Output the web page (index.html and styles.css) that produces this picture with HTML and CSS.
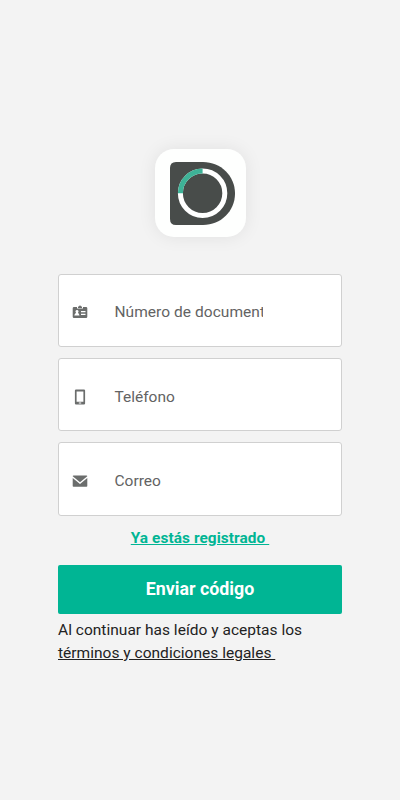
FILE: index.html
```html
<!DOCTYPE html>
<html lang="es">
<head>
<meta charset="utf-8">
<meta name="viewport" content="width=device-width, initial-scale=1">
<title>Registro</title>
<link rel="stylesheet" href="styles.css">
</head>
<body>
<main class="screen">
  <div class="logo">
    <svg width="65" height="63" viewBox="0 0 65 63">
      <path d="M6 0H33C51 0 65 14 65 31.5S51 63 33 63H6Q0 63 0 57V6Q0 0 6 0Z" fill="#484c4a"/>
      <circle cx="32.6" cy="31.2" r="22.2" fill="none" stroke="#fff" stroke-width="5"/>
      <path d="M10.4 31.2A22.2 22.2 0 0 1 32.6 9" fill="none" stroke="#3eb297" stroke-width="5"/>
    </svg>
  </div>
  <form class="form">
    <label class="field">
      <svg class="icon" width="16" height="16" viewBox="0 0 16 16">
        <path fill="#6b6d6c" fill-rule="evenodd" d="M2 3H5V4.6H11V3H14Q15.3 3 15.3 4.3V12.7Q15.3 14 14 14H2Q.7 14 .7 12.7V4.3Q.7 3 2 3ZM5 6A1.55 1.55 0 0 0 4.1 8.8Q2.5 9.7 2.3 11.6H7.5Q7.3 9.7 5.9 8.8A1.55 1.55 0 0 0 5 6ZM9 7.1H13.5V8.3H9ZM9 9.8H13.5V11H9Z"/>
        <path fill="#6b6d6c" d="M6 2.5H7A1 1 0 0 1 9 2.5H10V4H6Z"/>
      </svg>
      <span class="text clipped">Número de documento</span>
    </label>
    <label class="field">
      <svg class="icon" width="16" height="16" viewBox="0 0 16 16">
        <path fill="#6b6d6c" fill-rule="evenodd" d="M4 .5H12Q13.1 .5 13.1 1.5V14.5Q13.1 15.5 12 15.5H4Q2.9 15.5 2.9 14.5V1.5Q2.9 .5 4 .5ZM4.6 2.5V12.8H11.4V2.5ZM6.8 13.6V14.6H9.2V13.6Z"/>
      </svg>
      <span class="text">Teléfono</span>
    </label>
    <label class="field">
      <svg class="icon" width="16" height="16" viewBox="0 0 16 16">
        <path fill="#6b6d6c" d="M1.5 2.6H14.5Q15.3 2.6 15.3 3.3L8 9.3L.7 3.3Q.7 2.6 1.5 2.6ZM.7 5L8 10.9L15.3 5V12.9Q15.3 13.7 14.5 13.7H1.5Q.7 13.7 .7 12.9Z"/>
      </svg>
      <span class="text">Correo</span>
    </label>
    <a class="login">Ya estás registrado&nbsp;</a>
    <button class="submit" type="button">Enviar código</button>
    <p class="legal">Al continuar has leído y aceptas los <a class="terms">términos y condiciones legales&nbsp;</a></p>
  </form>
</main>
</body>
</html>
```
FILE: styles.css
```css
* { box-sizing: border-box; }
body {
  margin: 0;
  background: #f3f3f3;
  font-family: Roboto, sans-serif;
}
.screen {
  min-height: 800px;
  padding: 149px 57.5px 0;
  display: flex;
  flex-direction: column;
  align-items: center;
}
.logo {
  width: 91px;
  height: 88px;
  border-radius: 19px;
  background: #fefffe;
  box-shadow: 0 0 18px rgba(0, 0, 0, .08);
  display: flex;
  align-items: center;
  justify-content: center;
  padding-left: 4px;
}
.form {
  width: 284px;
  margin-top: 36.5px;
  display: flex;
  flex-direction: column;
}
.field {
  height: 73.4px;
  margin-bottom: 11px;
  padding: 4px 13px 0;
  display: flex;
  align-items: center;
  background: #fff;
  border: 1.4px solid #d0d0d0;
  border-radius: 3px;
}
.icon { flex: none; }
.text {
  margin-left: 26.5px;
  font-size: 15.5px;
  line-height: 24px;
  color: #636363;
  white-space: nowrap;
}
.clipped {
  width: 148px;
  overflow: hidden;
  letter-spacing: .05px;
}
.login {
  align-self: center;
  margin-top: 1px;
  font-size: 15.4px;
  line-height: 20px;
  font-weight: 700;
  color: #00b594;
  text-decoration: underline;
  letter-spacing: .07px;
}
.submit {
  height: 48.5px;
  margin: 17.5px 0 0;
  padding: 0 0 1px;
  border: 0;
  border-radius: 2px;
  background: #00b594;
  color: #fff;
  font: 700 17.8px/24px Roboto, sans-serif;
}
.legal {
  margin: 5.5px 0 0;
  font-size: 15.5px;
  line-height: 22.8px;
  letter-spacing: .02px;
  color: #222;
}
.terms { text-decoration: underline; }
```
